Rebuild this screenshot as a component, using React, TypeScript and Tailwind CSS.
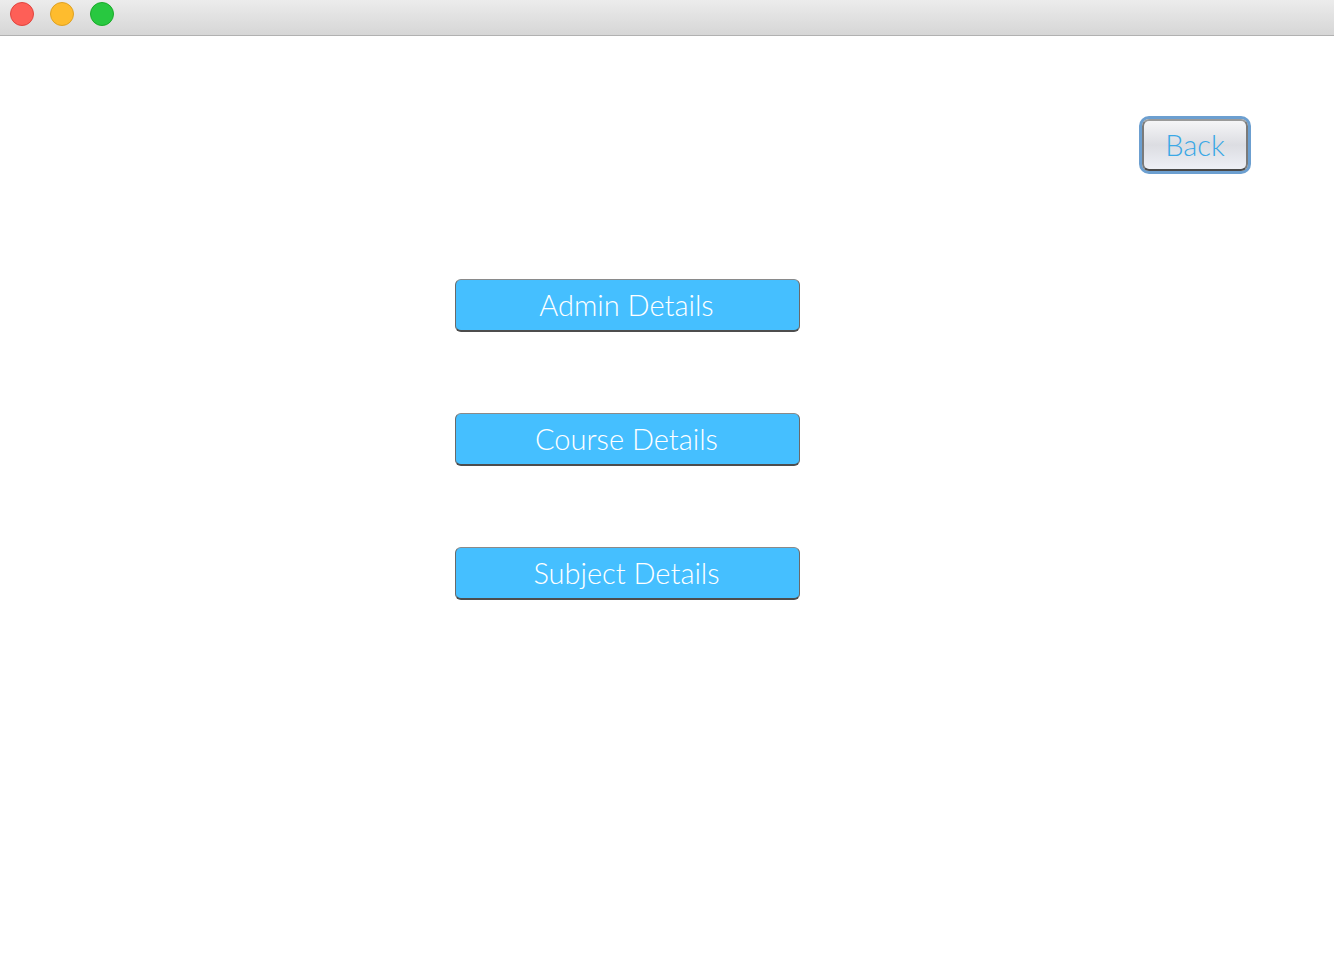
import React from 'react';

const items = ["Admin Details", "Course Details", "Subject Details"];

const App: React.FC = () => {
  return (
    <div className="w-[1334px] h-[964px] bg-white overflow-hidden" style={{ fontFamily: 'Lato, "Open Sans", sans-serif' }}>
      {/* title bar */}
      <div className="h-[36px] bg-gradient-to-b from-[#ececec] to-[#d6d6d6] border-b border-[#b1b1b1] flex items-start gap-[16px] pl-[10px] pt-[2px]">
        <span className="w-[24px] h-[24px] rounded-full bg-[#fe5f57] border border-[#e0443e]" />
        <span className="w-[24px] h-[24px] rounded-full bg-[#febc2e] border border-[#dea123]" />
        <span className="w-[24px] h-[24px] rounded-full bg-[#28c840] border border-[#1aab29]" />
      </div>

      <div className="flex justify-end pr-[83px] pt-[80px]">
        <button className="w-[112px] h-[58px] rounded-[10px] border-[3px] border-[#6c9fd0] p-0">
          <div className="w-full h-full rounded-[7px] border-2 border-t-[#9a9a9a] border-x-[#7a7a7a] border-b-[#4a4a4a] bg-gradient-to-b from-[#f5f5f7] via-[#dcdde2] to-[#eef0f6] flex items-center justify-center text-[29px] font-light text-[#3aa8e6] leading-none pb-[2px]">
            Back
          </div>
        </button>
      </div>

      <div className="flex flex-col gap-[81px] pl-[455px] pt-[105px]">
        {items.map((label) => (
          <button
            key={label}
            className="w-[345px] h-[53px] rounded-[6px] bg-[#45bfff] border border-t-[#8a8a8a] border-x-[#6a6a6a] border-b-[2px] border-b-[#4d4d4d] text-white text-[29px] font-light leading-none flex items-center justify-center pb-[2px] pr-[2px]"
          >
            {label}
          </button>
        ))}
      </div>
    </div>
  );
};

export default App;
